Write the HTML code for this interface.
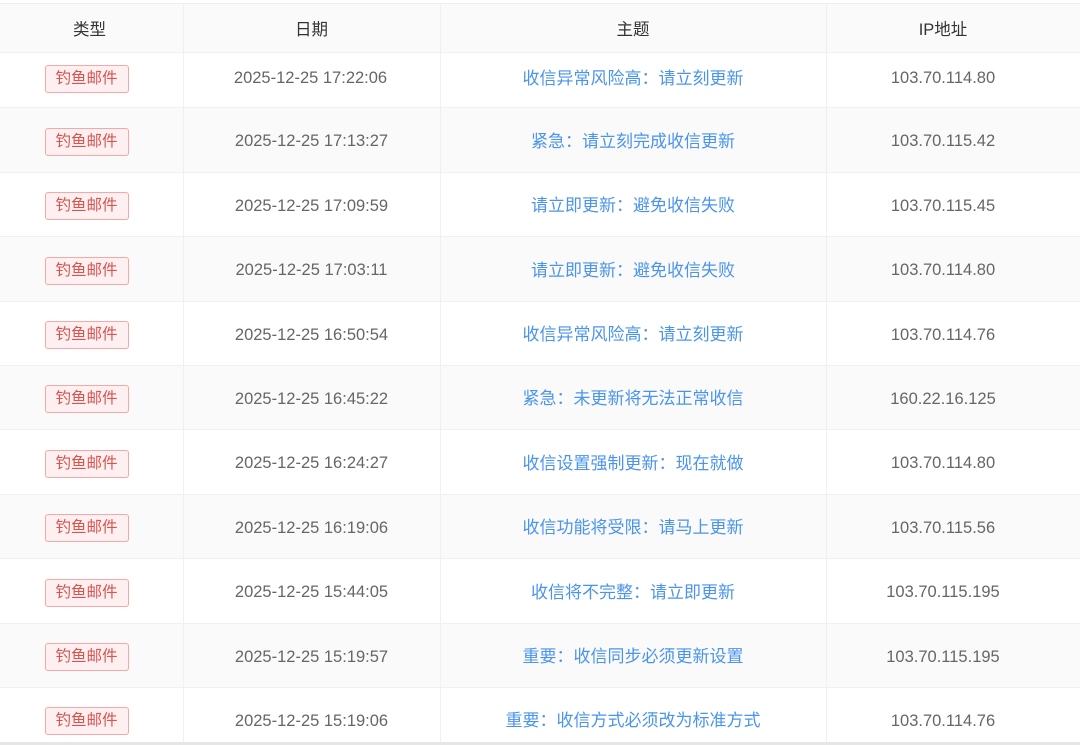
<!DOCTYPE html>
<html><head><meta charset="utf-8"><style>
html,body{margin:0;padding:0;background:#fff;width:1080px;height:745px;overflow:hidden;position:relative}
body{font-family:"Liberation Sans","Noto Sans CJK SC",sans-serif;}
.row{position:absolute;left:0;width:1080px;border-bottom:1px solid #f0f0f0;box-sizing:border-box}
.s{background:#fafafa}
.c{position:absolute;top:0;height:100%;display:flex;align-items:center;justify-content:center;font-size:16.5px;color:#666;white-space:nowrap;box-sizing:border-box}
.c1{left:0;width:183px;padding-top:3px}.c2{left:183px;width:257px;padding-top:3px}.c3{left:440px;width:386px;color:#4a94ee;font-size:17px;padding-bottom:2px}.c4{left:826px;width:254px;margin-left:-10px;padding-top:3px}
.f .c{top:-3px}
.vl{position:absolute;top:3px;width:1px;height:739px;background:#f0f0f0}
.hd .c{color:#333;font-size:16.5px;padding:0}
.hd{background:#fafafa;border-top:1px solid #eee}
.tag{display:inline-block;box-sizing:border-box;border:1px solid #f6a8a8;background:#fef0f0;color:#d9534f;border-radius:3px;font-size:15.5px;height:28px;line-height:26px;width:84px;text-align:center;margin-left:-10px}
.bot{position:absolute;left:0;top:742px;width:1080px;height:3px;background:#e6e6e6}
</style></head><body>
<div class="row hd" style="top:3px;height:50px"><div class="c c1" style="margin-left:-2px">类型</div><div class="c c2">日期</div><div class="c c3" style="color:#333;font-size:16.5px">主题</div><div class="c c4">IP地址</div></div>
<div class="row f" style="top:53px;height:55px"><div class="c c1"><span class="tag">钓鱼邮件</span></div><div class="c c2" style="margin-left:-1px">2025-12-25 17:22:06</div><div class="c c3">收信异常风险高：请立刻更新</div><div class="c c4">103.70.114.80</div></div>
<div class="row s" style="top:108px;height:65px"><div class="c c1"><span class="tag">钓鱼邮件</span></div><div class="c c2">2025-12-25 17:13:27</div><div class="c c3">紧急：请立刻完成收信更新</div><div class="c c4">103.70.115.42</div></div>
<div class="row" style="top:173px;height:64px"><div class="c c1"><span class="tag">钓鱼邮件</span></div><div class="c c2">2025-12-25 17:09:59</div><div class="c c3">请立即更新：避免收信失败</div><div class="c c4">103.70.115.45</div></div>
<div class="row s" style="top:237px;height:65px"><div class="c c1"><span class="tag">钓鱼邮件</span></div><div class="c c2">2025-12-25 17:03:11</div><div class="c c3">请立即更新：避免收信失败</div><div class="c c4">103.70.114.80</div></div>
<div class="row" style="top:302px;height:64px"><div class="c c1"><span class="tag">钓鱼邮件</span></div><div class="c c2">2025-12-25 16:50:54</div><div class="c c3">收信异常风险高：请立刻更新</div><div class="c c4">103.70.114.76</div></div>
<div class="row s" style="top:366px;height:64px"><div class="c c1"><span class="tag">钓鱼邮件</span></div><div class="c c2">2025-12-25 16:45:22</div><div class="c c3">紧急：未更新将无法正常收信</div><div class="c c4">160.22.16.125</div></div>
<div class="row" style="top:430px;height:65px"><div class="c c1"><span class="tag">钓鱼邮件</span></div><div class="c c2">2025-12-25 16:24:27</div><div class="c c3">收信设置强制更新：现在就做</div><div class="c c4">103.70.114.80</div></div>
<div class="row s" style="top:495px;height:64px"><div class="c c1"><span class="tag">钓鱼邮件</span></div><div class="c c2">2025-12-25 16:19:06</div><div class="c c3">收信功能将受限：请马上更新</div><div class="c c4">103.70.115.56</div></div>
<div class="row" style="top:559px;height:65px"><div class="c c1"><span class="tag">钓鱼邮件</span></div><div class="c c2">2025-12-25 15:44:05</div><div class="c c3">收信将不完整：请立即更新</div><div class="c c4">103.70.115.195</div></div>
<div class="row s" style="top:624px;height:64px"><div class="c c1"><span class="tag">钓鱼邮件</span></div><div class="c c2">2025-12-25 15:19:57</div><div class="c c3">重要：收信同步必须更新设置</div><div class="c c4">103.70.115.195</div></div>
<div class="row" style="top:688px;height:64px"><div class="c c1"><span class="tag">钓鱼邮件</span></div><div class="c c2">2025-12-25 15:19:06</div><div class="c c3">重要：收信方式必须改为标准方式</div><div class="c c4">103.70.114.76</div></div>
<div class="vl" style="left:183px"></div><div class="vl" style="left:440px"></div><div class="vl" style="left:826px"></div>
<div class="bot"></div>
</body></html>
